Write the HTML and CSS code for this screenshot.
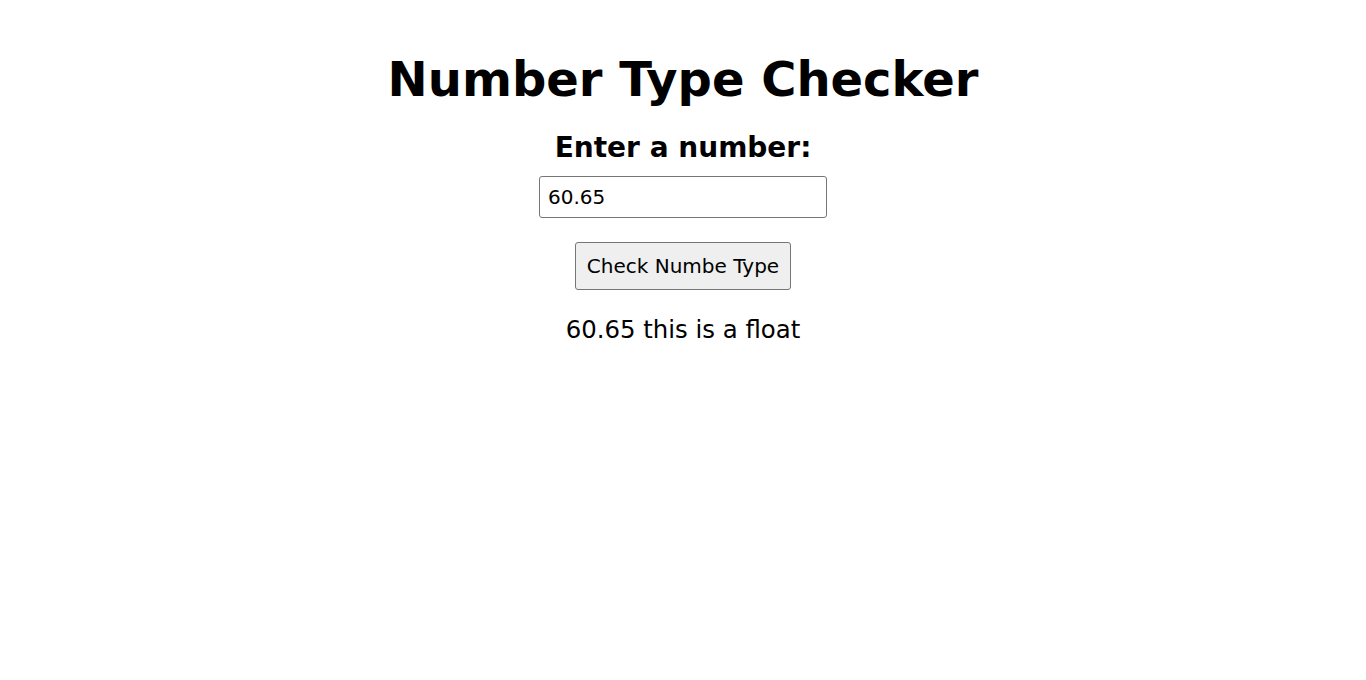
FILE: index.html
```html
<!DOCTYPE html>
<html lang="en">
<head>
<meta charset="utf-8">
<title>Number Type Checker</title>
<link rel="stylesheet" href="styles.css">
</head>
<body>
<main class="app">
  <h1 class="title">Number Type Checker</h1>
  <label class="label" for="num">Enter a number:</label>
  <input class="field" id="num" type="text" value="60.65">
  <button class="btn" type="button">Check Numbe Type</button>
  <p class="result">60.65 this is a float</p>
</main>
</body>
</html>
```
FILE: styles.css
```css
html, body {
  margin: 0;
  padding: 0;
  background: #ffffff;
}
body {
  font-family: "DejaVu Sans", Verdana, sans-serif;
  color: #000;
}
.app {
  display: flex;
  flex-direction: column;
  align-items: center;
  padding-top: 50px;
}
.title {
  margin: 0;
  font-size: 48px;
  font-weight: bold;
  line-height: 58px;
}
.label {
  margin-top: 23px;
  font-size: 28px;
  font-weight: bold;
  line-height: 34px;
}
.field {
  margin-top: 11px;
  box-sizing: border-box;
  width: 288px;
  height: 42px;
  padding: 0 8px;
  font-family: "DejaVu Sans", Verdana, sans-serif;
  font-size: 20px;
  color: #000;
  border: 1px solid #767676;
  border-radius: 3px;
  background: #fff;
}
.btn {
  margin-top: 24px;
  box-sizing: border-box;
  width: 216px;
  height: 48px;
  font-family: "DejaVu Sans", Verdana, sans-serif;
  font-size: 20px;
  color: #000;
  background: #efefef;
  border: 1px solid #767676;
  border-radius: 3px;
  padding: 0;
}
.result {
  margin: 25px 0 0;
  font-size: 24.4px;
  line-height: 30px;
}
```
